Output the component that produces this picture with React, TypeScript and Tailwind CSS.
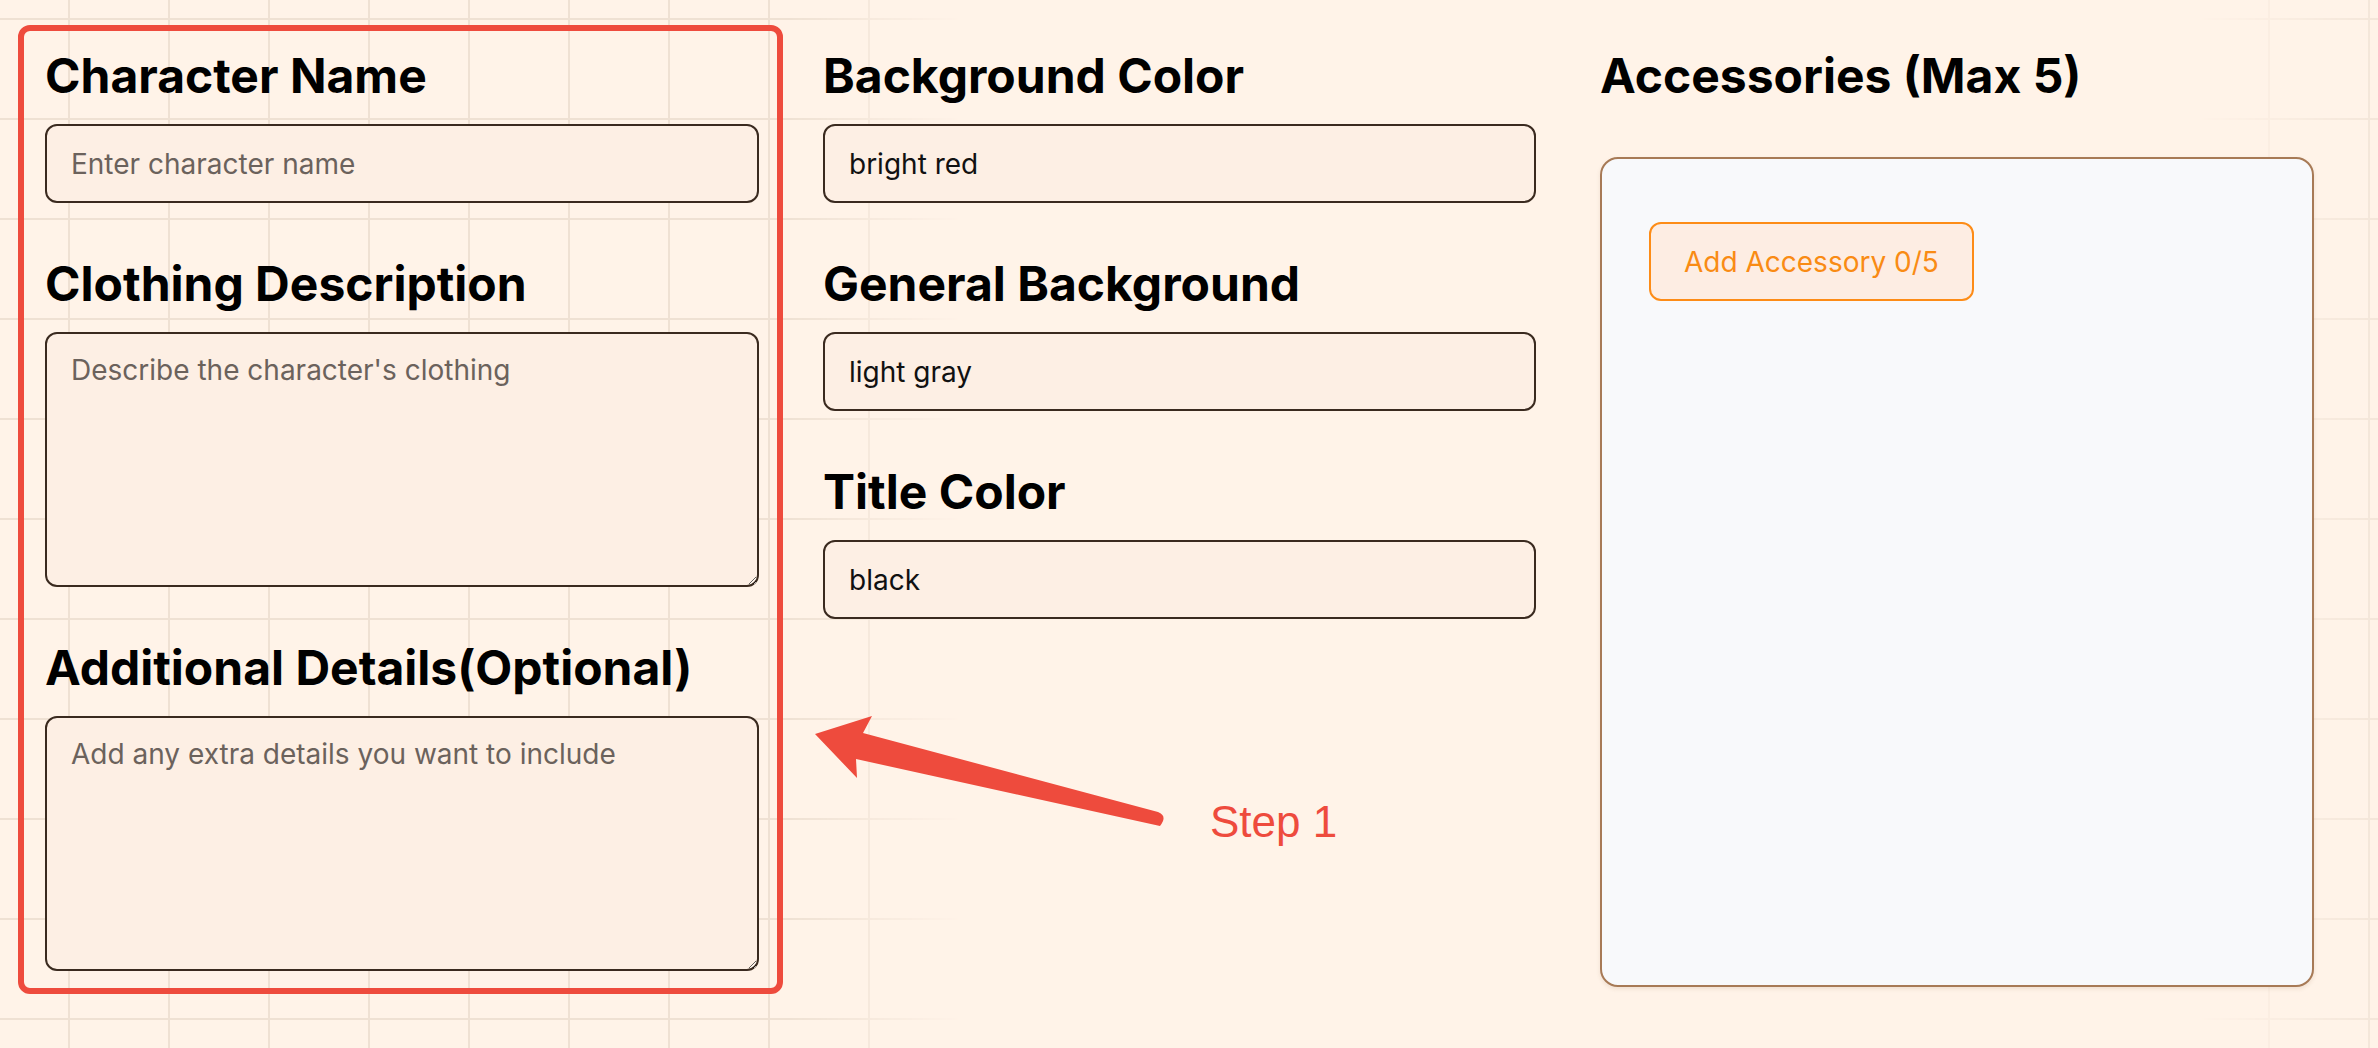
import React from "react";

function Label({ children }: { children: React.ReactNode }) {
  return (
    <label className="block text-[48px] leading-[72px] font-bold text-black">
      {children}
    </label>
  );
}

function TextInput({ placeholder, value }: { placeholder?: string; value?: string }) {
  return (
    <input
      type="text"
      placeholder={placeholder}
      defaultValue={value}
      className="mt-[12px] block w-full h-[79px] rounded-[12px] border-2 border-[#3a2a1f] bg-[#fdefe4] px-[24px] text-[28px] text-[#111] placeholder:text-[#6b625c] outline-none"
    />
  );
}

function TextArea({ placeholder }: { placeholder: string }) {
  return (
    <textarea
      placeholder={placeholder}
      className="mt-[12px] block w-full h-[255px] rounded-[12px] border-2 border-[#3a2a1f] bg-[#fdefe4] px-[24px] py-[15px] text-[28px] leading-[1.5] text-[#111] placeholder:text-[#6b625c] outline-none"
    />
  );
}

export default function App() {
  return (
    <div className="relative w-[2378px] h-[1048px] overflow-hidden bg-[#fff3e8] font-[Inter,sans-serif]">
      {/* faint grid background */}
      <div className="pointer-events-none absolute inset-0 bg-[linear-gradient(to_right,#efe1d3_2px,transparent_2px),linear-gradient(to_bottom,#efe1d3_2px,transparent_2px)] bg-[size:100px_100px] bg-[position:68px_18px] [mask-image:linear-gradient(to_right,black_0px,black_790px,transparent_960px,transparent_2200px,rgba(0,0,0,0.7)_2378px)]" />

      {/* form */}
      <div className="relative flex gap-[64px] pl-[45px] pt-[40px]">
        <div className="w-[714px] flex flex-col gap-[45px]">
          <div>
            <Label>Character Name</Label>
            <TextInput placeholder="Enter character name" />
          </div>
          <div>
            <Label>Clothing Description</Label>
            <TextArea placeholder="Describe the character's clothing" />
          </div>
          <div>
            <Label>Additional Details(Optional)</Label>
            <TextArea placeholder="Add any extra details you want to include" />
          </div>
        </div>

        <div className="w-[713px] flex flex-col gap-[45px]">
          <div>
            <Label>Background Color</Label>
            <TextInput value="bright red" />
          </div>
          <div>
            <Label>General Background</Label>
            <TextInput value="light gray" />
          </div>
          <div>
            <Label>Title Color</Label>
            <TextInput value="black" />
          </div>
        </div>

        <div className="w-[714px] flex flex-col">
          <Label>Accessories (Max 5)</Label>
          <div className="mt-[45px] h-[830px] rounded-[18px] border-2 border-[#a77a56] bg-[#f8f9fb] pl-[47px] pt-[63px] shadow-[0_2px_4px_rgba(120,80,40,0.12)]">
            <button className="h-[79px] rounded-[12px] border-2 border-[#fd8c17] bg-[#fdede3] px-[33px] text-[28px] text-[#f98b14]">
              Add Accessory 0/5
            </button>
          </div>
        </div>
      </div>

      {/* annotation overlay */}
      <div className="pointer-events-none absolute left-[18px] top-[25px] w-[765px] h-[969px] rounded-[12px] border-[6px] border-[#ee4b3d]" />
      <svg
        className="pointer-events-none absolute left-0 top-0"
        width="2378"
        height="1048"
        viewBox="0 0 2378 1048"
      >
        <path
          d="M815 734 L872 716 L863 733 L1158 812 Q1168 816 1160 826 L856 759 L857 778 Z"
          fill="#ee4b3d"
        />
      </svg>
      <div className="pointer-events-none absolute left-[1210px] top-[800px] text-[44px] leading-none text-[#ee4b3d] font-['Liberation_Sans',Arial,sans-serif]">
        Step 1
      </div>
    </div>
  );
}
